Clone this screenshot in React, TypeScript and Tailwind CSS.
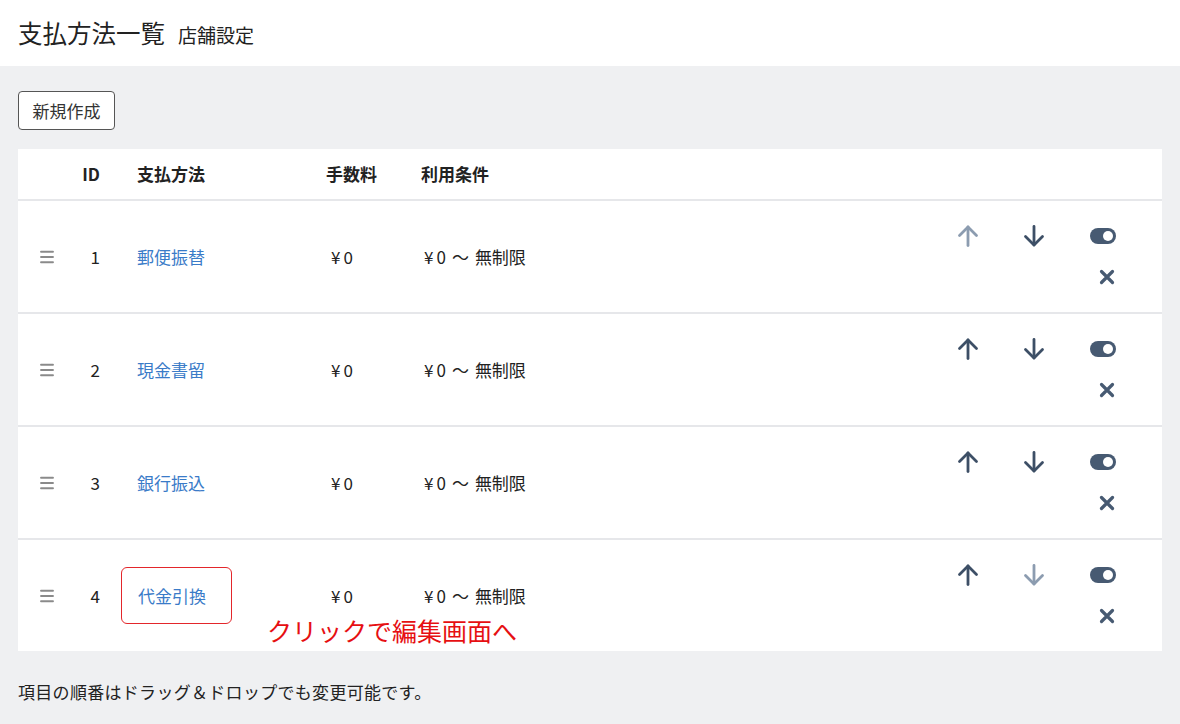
import { Menu } from 'lucide-react';

type Row = { id: number; name: string; canUp: boolean; canDown: boolean };

const rows: Row[] = [
  { id: 1, name: '郵便振替', canUp: false, canDown: true },
  { id: 2, name: '現金書留', canUp: true, canDown: true },
  { id: 3, name: '銀行振込', canUp: true, canDown: true },
  { id: 4, name: '代金引換', canUp: true, canDown: false },
];

const font = { fontFamily: '"Noto Sans CJK JP", "Noto Sans", sans-serif' };

function ArrowUp({ active }: { active: boolean }) {
  return (
    <svg width="24" height="24" viewBox="0 0 24 24" fill="none" stroke={active ? '#3d4f66' : '#8c9cb0'} strokeWidth="2.8" strokeLinecap="round" strokeLinejoin="round">
      <path d="M12 21.5V3" />
      <path d="M3.5 11.5 12 3l8.5 8.5" />
    </svg>
  );
}

function ArrowDown({ active }: { active: boolean }) {
  return (
    <svg width="24" height="24" viewBox="0 0 24 24" fill="none" stroke={active ? '#3d4f66' : '#8c9cb0'} strokeWidth="2.8" strokeLinecap="round" strokeLinejoin="round">
      <path d="M12 2.5V21" />
      <path d="M3.5 12.5 12 21l8.5-8.5" />
    </svg>
  );
}

function Toggle() {
  return (
    <div className="w-[26px] h-[16px] rounded-full bg-[#475a72] flex items-center justify-end pr-[3px]">
      <div className="w-[10px] h-[10px] rounded-full bg-white" />
    </div>
  );
}

function Cross() {
  return (
    <svg width="18" height="18" viewBox="0 0 18 18" fill="none" stroke="#475a72" strokeWidth="3.2" strokeLinecap="round">
      <path d="M3.5 3.5l11 11M14.5 3.5l-11 11" />
    </svg>
  );
}

function Yen() {
  return <span className="mr-[3px]">¥</span>;
}

export default function App() {
  return (
    <div className="min-h-screen bg-[#eff0f2] text-[#222]" style={font}>
      <header className="h-[66px] bg-white flex items-center px-[18px] gap-[13px]">
        <h1 className="text-[24.5px] leading-none">支払方法一覧</h1>
        <span className="text-[19px] leading-none mt-[2px]">店舗設定</span>
      </header>

      <div className="px-[18px] pt-[25px]">
        <button className="h-[39px] w-[97px] border border-[#555] rounded-[4px] bg-white text-[17px] text-[#333]">新規作成</button>

        <div className="mt-[19px] bg-white">
          <div className="h-[52px] flex items-center text-[17px] font-bold border-b-2 border-[#e6e7ea]">
            <div className="w-[82px] text-right">ID</div>
            <div className="w-[226px] pl-[37px]">支払方法</div>
            <div className="w-[95px]">手数料</div>
            <div>利用条件</div>
          </div>

          {rows.map((r, i) => (
            <div key={r.id} className={`flex items-center relative text-[17px] ${i < rows.length - 1 ? 'h-[113px] border-b-2 border-[#e6e7ea]' : 'h-[111px]'}`}>
              <div className="w-[20px]" />
              <Menu size={18} className="text-[#8a8a8a]" strokeWidth={2.5} />
              <div className="w-[44px] text-right">{r.id}</div>
              <div className="w-[226px] pl-[21px]">
                {r.id === 4 ? (
                  <span className="inline-flex items-center w-[111px] h-[57px] px-[16px] border-[1.5px] border-[#e3262b] rounded-[6px] text-[#3a7bc8]">{r.name}</span>
                ) : (
                  <span className="pl-[16px] text-[#3a7bc8]">{r.name}</span>
                )}
              </div>
              <div className="w-[94px] pl-[5px]"><Yen />0</div>
              <div className="flex-1 pl-[4px]"><Yen />0<span className="mx-[6px]">〜</span>無制限</div>
              <div className="self-start pt-[22px] flex flex-col mr-[36px]">
                <div className="flex items-center h-[26px]">
                  <div className="w-[66px] flex justify-center"><ArrowUp active={r.canUp} /></div>
                  <div className="w-[66px] flex justify-center"><ArrowDown active={r.canDown} /></div>
                  <div className="w-[13px]" />
                  <div className="w-[46px] flex justify-center"><Toggle /></div>
                </div>
                <div className="flex justify-end mt-[19px] pr-[10px]">
                  <Cross />
                </div>
              </div>
              {r.id === 4 && (
                <span className="absolute left-[249px] top-[78px] text-[25px] leading-none text-[#e60f12]">クリックで編集画面へ</span>
              )}
            </div>
          ))}
        </div>

        <p className="mt-[28px] text-[17px] tracking-[0.3px] text-[#222]">項目の順番はドラッグ＆ドロップでも変更可能です。</p>
      </div>
    </div>
  );
}
